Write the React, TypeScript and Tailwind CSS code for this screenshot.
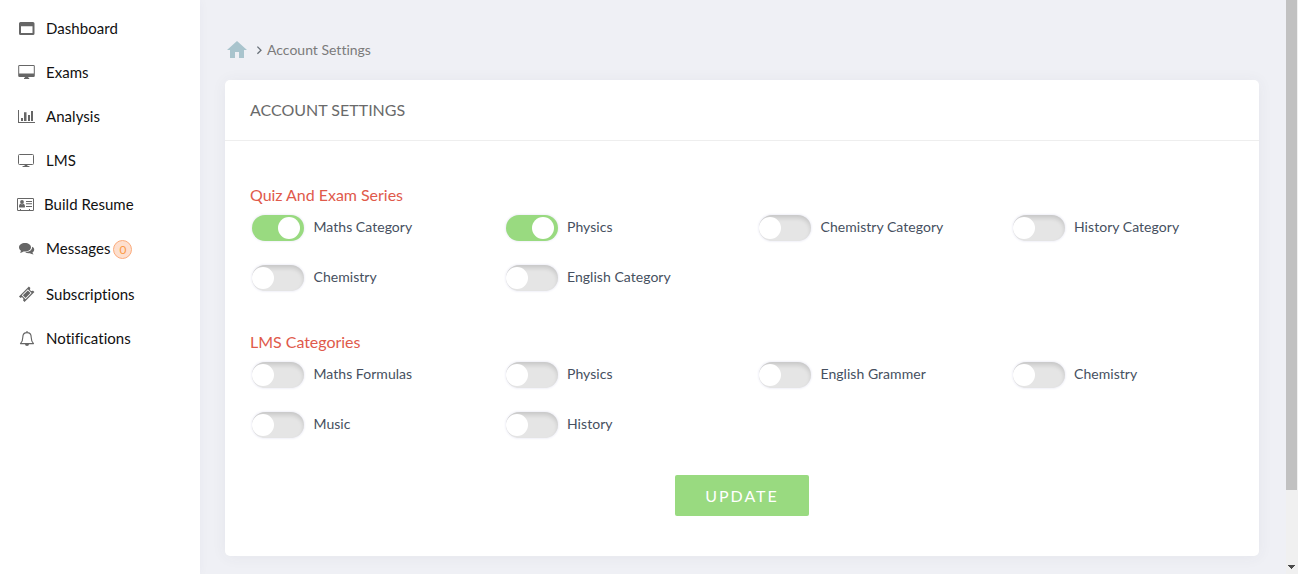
import React from "react";

type IconProps = { children: React.ReactNode; className?: string };

function Icon({ children, className = "" }: IconProps) {
  return (
    <svg viewBox="0 0 20 20" className={`h-5 w-5 shrink-0 text-[#666] ${className}`} fill="currentColor">
      {children}
    </svg>
  );
}

const icons = {
  dashboard: (
    <path fillRule="evenodd" d="M4.500 4h12.500A1.500 1.500 0 0 1 18.500 5.500v10a1.500 1.500 0 0 1-1.500 1.500h-12.500A1.500 1.500 0 0 1 3 15.500v-10A1.500 1.500 0 0 1 4.500 4zM5 8.200v6.800h11.500V8.200z" />
  ),
  exams: (
    <>
      <path fillRule="evenodd" d="M3.500 3h14A1.300 1.300 0 0 1 18.800 4.300v9.400a1.300 1.300 0 0 1-1.300 1.300h-14A1.300 1.300 0 0 1 2.200 13.700V4.300A1.300 1.300 0 0 1 3.500 3zM3.200 4v7.500h14.600V4z" />
      <path d="M9 15h3.200v.8h1V17H8v-1.200h1z" />
    </>
  ),
  analysis: (
    <path d="M2 4h1v12h16v1H2zM5 12h2v3H5zM8 6.300h2.500V15H8zM12 9h2v6h-2zM15 5h2v10h-2z" />
  ),
  lms: (
    <>
      <rect x="2.500" y="4.500" width="15" height="10" rx="1" fill="none" stroke="currentColor" />
      <path d="M8.700 15h2.600v.7l2.200.5v.8H6.500v-.8l2.200-.5z" />
    </>
  ),
  resume: (
    <>
      <path fillRule="evenodd" d="M2.200 4h14.600A1.200 1.200 0 0 1 18 5.200v10.600a1.200 1.200 0 0 1-1.200 1.200H2.200A1.200 1.200 0 0 1 1 15.800V5.200A1.200 1.200 0 0 1 2.200 4zM2 5.100v10.800h2V15h1v.9h8V15h1v.9h3V5.100z" />
      <circle cx="6" cy="8" r="1.900" />
      <path d="M3 12.700c0-2 .8-3 1.700-3 .8.700 1.800.7 2.600 0 .9 0 1.700 1 1.700 3 0 .5-.4.900-.8.900H3.800c-.4 0-.8-.4-.8-.9zM10 7h6v1h-6zM10 9.300h6v1h-6zM10 12h6v1h-6z" />
    </>
  ),
  messages: (
    <g transform="translate(0 .9)">
      <path d="M9 4c3.500 0 6 1.900 6 4.300s-2.500 4.300-6 4.300c-.5 0-1 0-1.500-.1-1.100.8-2.300 1.200-3.600 1.300.6-.6 1-1.200 1.100-2C3.700 11 3 9.700 3 8.300 3 5.900 5.600 4 9 4z" />
      <path d="M15.900 7.700c1.300.7 2.300 1.800 2.300 3 0 1.300-.7 2.300-1.800 3 .2.700.6 1.300 1.200 1.800-1.400 0-2.600-.5-3.600-1.200-1.800.3-3.600-.1-4.900-.9 4 0 7.500-2.300 7-5.700z" />
    </g>
  ),
  subscriptions: (
    <g transform="translate(.7 .2) rotate(-45 10 10)">
      <path fillRule="evenodd" d="M3 6.100h14v2.200a1.700 1.700 0 0 0 0 3.400v2.200H3v-2.200a1.700 1.700 0 0 0 0-3.400zM5.700 7.300v5.400h8.600V7.300z" />
      <path d="M6.500 8.100h7v3.800h-7z" />
    </g>
  ),
  notifications: (
    <g transform="translate(1 .6)">
      <path d="M10 4c-3 0-4.200 2.100-4.200 4.600 0 3.200-.8 4.900-2.300 6.400h13c-1.500-1.500-2.300-3.200-2.300-6.400C14.200 6.100 13 4 10 4zM10 4V2.500" fill="none" stroke="currentColor" strokeWidth="1.150" strokeLinejoin="round" />
      <path d="M8 15.300h4a2 2 0 0 1-4 0z" />
    </g>
  ),
};

type NavEntry = { label: string; icon: keyof typeof icons; badge?: string };

const nav: NavEntry[] = [
  { label: "Dashboard", icon: "dashboard" },
  { label: "Exams", icon: "exams" },
  { label: "Analysis", icon: "analysis" },
  { label: "LMS", icon: "lms" },
  { label: "Build Resume", icon: "resume" },
  { label: "Messages", icon: "messages", badge: "0" },
  { label: "Subscriptions", icon: "subscriptions" },
  { label: "Notifications", icon: "notifications" },
];

function Sidebar() {
  return (
    <aside className="z-10 w-[200px] shrink-0 bg-white pt-1.5 shadow-[0_0_10px_rgba(60,60,100,0.04)]">
      {nav.map((item) => (
        <a
          key={item.label}
          className={`flex items-center pl-4 text-[15px] leading-5 tracking-[0.04px] text-[#111] ${item.badge ? "h-[46px] pb-0.5" : "h-11"}`}
        >
          <Icon>{icons[item.icon]}</Icon>
          <span className={item.icon === "resume" ? "ml-2" : "ml-2.5"}>{item.label}</span>
          {item.badge && (
            <span className="mt-0.5 ml-[3px] flex h-[19px] w-[19px] items-center justify-center rounded-full border border-[#fbab7c] bg-[#fddfce] pt-px text-[12px] leading-none text-[#fb9a45]">
              {item.badge}
            </span>
          )}
        </a>
      ))}
    </aside>
  );
}

function Toggle({ label, on = false }: { label: string; on?: boolean }) {
  return (
    <label className="flex h-[50px] items-start px-[15px]">
      <span
        className={`mt-px ml-0.5 flex h-[26px] w-[52px] shrink-0 items-center rounded-full ${
          on
            ? "justify-end bg-[#99da80] pr-1 shadow-[0_0_2px_1px_#f1f1f8]"
            : "bg-[#e5e5e5] shadow-[inset_0_3px_4px_rgba(0,0,0,0.13),0_0_2px_1px_#f1f1f8]"
        }`}
      >
        <span className="h-[22px] w-[22px] rounded-full bg-white" />
      </span>
      <span className="ml-[9.5px] pt-[3px] text-[14px] leading-5 tracking-[0.04px] text-[#465060]">{label}</span>
    </label>
  );
}

function Section({ title, items }: { title: string; items: { label: string; on?: boolean }[] }) {
  return (
    <section className="h-[147px]">
      <h4 className="h-[29px] text-[16px] leading-[20px] tracking-[-0.03px] text-[#e05a4b]">{title}</h4>
      <div className="-mx-[15px] grid grid-cols-4">
        {items.map((item) => (
          <Toggle key={item.label} {...item} />
        ))}
      </div>
    </section>
  );
}

export default function App() {
  return (
    <div className="flex h-[574px] w-[1298px] overflow-hidden bg-[#eff0f5] font-[Lato,sans-serif] [font-variant-ligatures:none]">
      <Sidebar />
      <main className="w-[1086px] shrink-0 pt-10 pr-[27px] pl-[25px]">
        <nav className="flex h-10 items-start text-[14px] leading-5 text-[#7b7b7b]">
          <svg viewBox="2 2 20 20" className="ml-0.5 h-5 w-5" fill="#a9c4cd">
            <path d="M10 20v-6h4v6h5v-8h3L12 3 2 12h3v8z" />
          </svg>
          <svg viewBox="0 0 8 10" className="mt-[5px] ml-2 h-2.5 w-2" fill="none" stroke="#687078" strokeWidth="1.300">
            <path d="M2.400 1.600 6 5.200 2.400 8.800" />
          </svg>
          <span className="ml-1">Account Settings</span>
        </nav>
        <div className="h-[476px] rounded-[5px] bg-white shadow-[0_1px_15px_rgba(69,65,78,0.06)]">
          <header className="h-[61px] border-b border-[#eee] px-[25px] pt-5 text-[16px] leading-5 text-[#6a6a6a]">
            ACCOUNT SETTINGS
          </header>
          <div className="px-[25px] pt-11">
            <Section
              title="Quiz And Exam Series"
              items={[
                { label: "Maths Category", on: true },
                { label: "Physics", on: true },
                { label: "Chemistry Category" },
                { label: "History Category" },
                { label: "Chemistry" },
                { label: "English Category" },
              ]}
            />
            <Section
              title="LMS Categories"
              items={[
                { label: "Maths Formulas" },
                { label: "Physics" },
                { label: "English Grammer" },
                { label: "Chemistry" },
                { label: "Music" },
                { label: "History" },
              ]}
            />
            <div className="-mt-1 flex justify-center">
              <button className="h-[41px] w-[134px] rounded-[2px] bg-[#99da80] text-[16px] leading-5 tracking-[2px] text-white">
                UPDATE
              </button>
            </div>
          </div>
        </div>
      </main>
      <div className="flex w-3 shrink-0 flex-col justify-between bg-[#f0f0f0]">
        <div className="h-[490px] w-[11px] bg-[#c1c1c1]" />
        <svg viewBox="0 0 7 4" className="mb-[5px] ml-0.5 h-1 w-[7px]" fill="#4a4a4a" shapeRendering="crispEdges">
          <path d="M0 0h7v1H6v1H5v1H4v1H3V3H2V2H1V1H0z" />
        </svg>
      </div>
    </div>
  );
}
